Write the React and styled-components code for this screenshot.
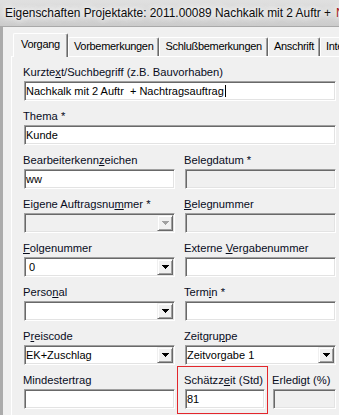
import React from "react";
import styled, { createGlobalStyle, css } from "styled-components";

const GlobalStyle = createGlobalStyle`
  html, body { margin: 0; padding: 0; }
  body {
    background: #f0f0f0;
    font-family: "Liberation Sans", Arial, sans-serif;
    overflow: hidden;
  }
  * { box-sizing: border-box; }
`;

const Window = styled.div`
  width: 339px;
  height: 415px;
  overflow: hidden;
  display: flex;
  flex-direction: column;
  background: #f0f0f0;
`;

const TitleBar = styled.div`
  flex: none;
  height: 26px;
  padding: 0 0 1px 5px;
  display: flex;
  align-items: center;
  white-space: nowrap;
  overflow: hidden;
  font-size: 11.9px;
  color: #0c0c0c;
  background: linear-gradient(to bottom, #e0e0e0 0%, #d5d5d5 60%, #cbcbcb 100%);
  text-shadow: 0 0 5px #fff, 0 0 9px #fff, 0 0 12px #fff;
`;

const TitleAccent = styled.span`
  color: #a3161b;
  margin-left: 5px;
`;

const Frame = styled.div`
  flex: 1;
  min-height: 0;
  display: flex;
  flex-direction: column;
  border-top: 1px solid #a9a9a9;
  border-left: 3px solid #ababab;
  padding: 6px 0 0 8px;
`;

const TabStrip = styled.div`
  flex: none;
  display: flex;
  align-items: flex-end;
  height: 23px;
  padding-left: 2px;
`;

const Tab = styled.div`
  flex: none;
  position: relative;
  z-index: ${(p) => (p.$active ? 1 : 0)};
  height: ${(p) => (p.$active ? 24 : 19)}px;
  margin-bottom: ${(p) => (p.$active ? -1 : 0)}px;
  padding: ${(p) => (p.$active ? "2px 7px 0" : "0 5px")};
  font-size: 11px;
  line-height: 16px;
  letter-spacing: -0.3px;
  color: #000;
  white-space: nowrap;
  background: #f0f0f0;
  border-top: 1px solid #fff;
  border-left: 1px solid #fff;
  border-right: 1px solid #696969;
  border-radius: 2px 2px 0 0;
  box-shadow: inset -1px 0 #a0a0a0;
`;

const Panel = styled.div`
  flex: 1;
  margin-right: -30px;
  background: #f0f0f0;
  border-top: 1px solid #fff;
  border-left: 1px solid #fff;
  padding: 8px 0 0 12px;
`;

const Form = styled.div`
  display: grid;
  grid-template-columns: 151px 151px;
  column-gap: 10px;
  row-gap: 8px;
  width: 312px;
`;

const Field = styled.div`
  position: relative;
  display: flex;
  flex-direction: column;
  gap: 1px;
  min-width: 0;
  grid-column: ${(p) => (p.$wide ? "1 / -1" : "auto")};
  ${(p) =>
    p.$highlight &&
    css`
      &::after {
        content: "";
        position: absolute;
        top: -7px;
        left: -8px;
        right: -3px;
        bottom: -5px;
        border: 1px solid #e3262c;
        pointer-events: none;
      }
    `}
`;

const Label = styled.label`
  display: block;
  height: 15px;
  margin-left: -1px;
  font-size: 11.2px;
  line-height: 15px;
  color: #080c1c;
  white-space: nowrap;
  u {
    text-decoration-thickness: 1px;
    text-underline-offset: 1px;
  }
`;

const sunken = css`
  border: 1px solid;
  border-color: #a0a0a0 #ffffff #ffffff #a0a0a0;
  box-shadow: inset 1px 1px #696969, inset -1px -1px #e3e3e3;
`;

const TextBox = styled.div`
  ${sunken};
  height: 20px;
  padding-left: 1px;
  font-size: 11px;
  line-height: 18px;
  color: #000;
  white-space: nowrap;
  overflow: hidden;
  background: ${(p) => (p.$disabled ? "#f0f0f0" : "#ffffff")};
`;

const Caret = styled.span`
  display: inline-block;
  width: 1px;
  height: 12px;
  margin-left: 1px;
  vertical-align: -2px;
  background: #000;
`;

const Combo = styled.div`
  ${sunken};
  height: 20px;
  padding: 1px;
  display: flex;
  background: ${(p) => (p.$disabled ? "#f0f0f0" : "#ffffff")};
`;

const ComboText = styled.div`
  flex: 1;
  min-width: 0;
  font-size: 11px;
  line-height: 16px;
  color: #000;
  white-space: nowrap;
  overflow: hidden;
`;

const DropButton = styled.div`
  flex: none;
  width: 16px;
  height: 16px;
  display: flex;
  align-items: center;
  justify-content: center;
  background: #f0f0f0;
  border: 1px solid;
  border-color: #f0f0f0 #696969 #696969 #f0f0f0;
  box-shadow: inset 1px 1px #ffffff, inset -1px -1px #a0a0a0;
  color: ${(p) => (p.$disabled ? "#a0a0a0" : "#000000")};
`;

const Split = styled.div`
  display: grid;
  grid-template-columns: 80px 1fr;
  column-gap: 8px;
`;

const Arrow = () => (
  <svg width="7" height="4" viewBox="0 0 7 4" shapeRendering="crispEdges">
    <path d="M0 0h7v1H0zM1 1h5v1H1zM2 2h3v1H2zM3 3h1v1H3z" fill="currentColor" />
  </svg>
);

const ComboBox = ({ value, disabled }) => (
  <Combo $disabled={disabled}>
    <ComboText>{value}</ComboText>
    <DropButton $disabled={disabled}>
      <Arrow />
    </DropButton>
  </Combo>
);

const tabs = ["Vorgang", "Vorbemerkungen", "Schlußbemerkungen", "Anschrift", "Intern"];

export default function App() {
  return (
    <>
      <GlobalStyle />
      <Window>
        <TitleBar>
          Eigenschaften Projektakte: 2011.00089 Nachkalk mit 2 Auftr +
          <TitleAccent>Nachtragsauftrag</TitleAccent>
        </TitleBar>
        <Frame>
          <TabStrip>
            {tabs.map((t, i) => (
              <Tab key={t} $active={i === 0}>
                {t}
              </Tab>
            ))}
          </TabStrip>
          <Panel>
            <Form>
              <Field $wide>
                <Label>
                  Kurzte<u>x</u>t/Suchbegriff (z.B. Bauvorhaben)
                </Label>
                <TextBox>
                  Nachkalk mit 2 Auftr&nbsp; + Nachtragsauftrag
                  <Caret />
                </TextBox>
              </Field>
              <Field $wide>
                <Label>Thema *</Label>
                <TextBox>Kunde</TextBox>
              </Field>

              <Field>
                <Label>
                  Bearbeiterkenn<u>z</u>eichen
                </Label>
                <TextBox>ww</TextBox>
              </Field>
              <Field>
                <Label>Belegdatum *</Label>
                <TextBox $disabled />
              </Field>

              <Field>
                <Label>
                  Eigene Auftragsnu<u>m</u>mer *
                </Label>
                <ComboBox disabled value="" />
              </Field>
              <Field>
                <Label>
                  <u>B</u>elegnummer
                </Label>
                <TextBox $disabled />
              </Field>

              <Field>
                <Label>
                  <u>F</u>olgenummer
                </Label>
                <ComboBox value={"\u00a00"} />
              </Field>
              <Field>
                <Label>
                  Externe <u>V</u>ergabenummer
                </Label>
                <TextBox />
              </Field>

              <Field>
                <Label>
                  Perso<u>n</u>al
                </Label>
                <ComboBox value="" />
              </Field>
              <Field>
                <Label>
                  Term<u>i</u>n *
                </Label>
                <TextBox />
              </Field>

              <Field>
                <Label>
                  P<u>r</u>eiscode
                </Label>
                <ComboBox value="EK+Zuschlag" />
              </Field>
              <Field>
                <Label>
                  Zeitgru<u>p</u>pe
                </Label>
                <ComboBox value="Zeitvorgabe 1" />
              </Field>

              <Field>
                <Label>Mindestertrag</Label>
                <TextBox />
              </Field>
              <Split>
                <Field $highlight>
                  <Label>
                    Schätzz<u>e</u>it (Std)
                  </Label>
                  <TextBox>81</TextBox>
                </Field>
                <Field>
                  <Label>Erledigt (%)</Label>
                  <TextBox $disabled />
                </Field>
              </Split>
            </Form>
          </Panel>
        </Frame>
      </Window>
    </>
  );
}
